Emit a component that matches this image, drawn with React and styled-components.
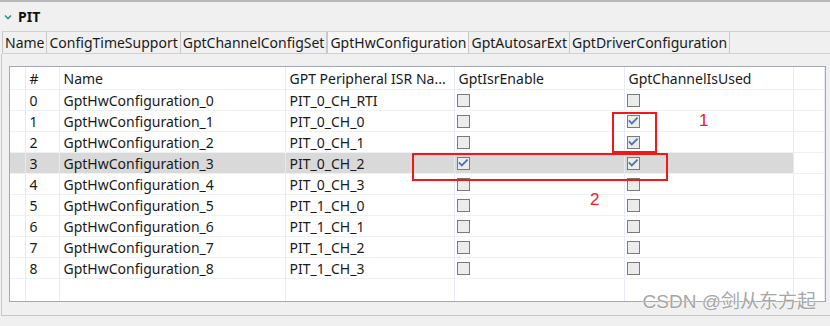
import React from "react";
import styled, { createGlobalStyle } from "styled-components";

const GlobalStyle = createGlobalStyle`
    body {
        margin: 0;
        background: #f0f0f0;
        font-family: "Noto Sans", "Open Sans", sans-serif;
        color: #1a1a1a;
    }
`;

const tabs = [
    "Name",
    "ConfigTimeSupport",
    "GptChannelConfigSet",
    "GptHwConfiguration",
    "GptAutosarExt",
    "GptDriverConfiguration",
];

const isrNames = [
    "PIT_0_CH_RTI", "PIT_0_CH_0", "PIT_0_CH_1", "PIT_0_CH_2",
    "PIT_0_CH_3", "PIT_1_CH_0", "PIT_1_CH_1", "PIT_1_CH_2", "PIT_1_CH_3",
];

const rows = isrNames.map((isr, i) => ({
    id: i,
    name: `GptHwConfiguration_${i}`,
    isr,
    isrEnable: i === 3,
    used: i >= 1 && i <= 3,
}));

class App extends React.Component {
    render() {
        return (
            <Frame>
                <GlobalStyle/>
                <SectionHeader>
                    <Chevron viewBox="0 0 10 10">
                        <path d="M2 3.5 L5 6.5 L8 3.5" fill="none" stroke="#3a8f8a" strokeWidth="1.6"/>
                    </Chevron>
                    PIT
                </SectionHeader>
                <TabBar>
                    {tabs.map(t => (
                        <Tab key={t} active={t === "GptHwConfiguration"}>{t}</Tab>
                    ))}
                </TabBar>
                <Body>
                    <Panel>
                        <Table>
                            <colgroup>
                                <col style={{width: 15}}/>
                                <col style={{width: 34}}/>
                                <col style={{width: 226}}/>
                                <col style={{width: 169}}/>
                                <col style={{width: 170}}/>
                                <col style={{width: 169}}/>
                                <col/>
                            </colgroup>
                            <thead>
                                <tr>
                                    <Th/>
                                    <Th>#</Th>
                                    <Th>Name</Th>
                                    <Th>GPT Peripheral ISR Na...</Th>
                                    <Th>GptIsrEnable</Th>
                                    <Th>GptChannelIsUsed</Th>
                                    <Th/>
                                </tr>
                            </thead>
                            <tbody>
                                {rows.map(r => (
                                    <Row key={r.id} selected={r.id === 3}>
                                        <Td/>
                                        <Td>{r.id}</Td>
                                        <Td>{r.name}</Td>
                                        <Td>{r.isr}</Td>
                                        <Td><CheckBox checked={r.isrEnable}/></Td>
                                        <Td><CheckBox checked={r.used}/></Td>
                                        <Td/>
                                    </Row>
                                ))}
                                <FillerRow>
                                    <Td/><Td/><Td/><Td/><Td/><Td/><Td/>
                                </FillerRow>
                            </tbody>
                        </Table>
                        <Mark left={602} top={45} width={45} height={41}/>
                        <Mark left={402} top={86} width={256} height={28}/>
                        <Note left={689} top={44}>1</Note>
                        <Note left={580} top={123}>2</Note>
                    </Panel>
                    <Watermark>CSDN @剑从东方起</Watermark>
                </Body>
            </Frame>
        );
    }
}

function CheckBox({checked}) {
    return (
        <Box>
            {checked && (
                <svg width="12" height="12" viewBox="0 0 12 12">
                    <path d="M1.8 5.4 L4.8 8.4 L10.6 2.6" fill="none" stroke="#4a76b0" strokeWidth="1.8"/>
                </svg>
            )}
        </Box>
    );
}

const Frame = styled.div`
    width: 830px;
    height: 326px;
    box-sizing: border-box;
    border-top: 2px solid #b8b8b8;
    overflow: hidden;
`;

const SectionHeader = styled.div`
    height: 29px;
    display: flex;
    align-items: center;
    gap: 5px;
    padding-left: 3px;
    font-size: 14px;
    font-weight: 700;
    color: #111;
`;

const Chevron = styled.svg`
    width: 10px;
    height: 10px;
`;

const TabBar = styled.div`
    display: flex;
    height: 21px;
    margin-left: 2px;
    border-top: 1px solid #d0d0d0;
    border-bottom: 1px solid #d0d0d0;
`;

const Tab = styled.div`
    display: flex;
    align-items: center;
    padding: 0 2px;
    font-size: 14px;
    border-right: 1px solid #c8c8c8;
    border-left: ${p => p.active ? "1px solid #c8c8c8" : "none"};
    background: ${p => p.active ? "#f7f7f7" : "transparent"};
    &:first-child {
        border-left: 1px solid #c8c8c8;
    }
`;

const Body = styled.div`
    position: relative;
    margin: 0 0 0 1px;
    padding: 12px 4px 13px 7px;
    border-left: 1px solid #c8c8c8;
    border-bottom: 1px solid #c8c8c8;
`;

const Panel = styled.div`
    position: relative;
    height: 234px;
    background: #fff;
    border: 1px solid #a4a9b1;
    overflow: hidden;
`;

const Table = styled.table`
    width: 100%;
    height: 100%;
    table-layout: fixed;
    border-collapse: collapse;
    font-size: 14px;
`;

const Th = styled.th`
    height: 22px;
    padding: 0 4px;
    text-align: left;
    font-weight: 400;
    white-space: nowrap;
    overflow: hidden;
    border-right: 1px solid #e6ebf3;
    border-bottom: 1px solid #eef0f3;
`;

const Row = styled.tr`
    height: 21px;
    background: ${p => p.selected ? "#d9d9d9" : "transparent"};
    & > td:last-child {
        background: #fff;
    }
`;

const FillerRow = styled.tr`
    & > td {
        border-bottom: none;
    }
`;

const Td = styled.td`
    padding: 0 4px;
    white-space: nowrap;
    overflow: hidden;
    border-right: 1px solid #e6ebf3;
    border-bottom: 1px solid #eef0f3;
`;

const Box = styled.div`
    width: 11px;
    height: 11px;
    margin-left: -2px;
    border: 1px solid #7a7a7a;
    background: #ececec;
    display: flex;
    align-items: center;
    justify-content: center;
    & svg {
        flex: none;
    }
`;

const Mark = styled.div`
    position: absolute;
    left: ${p => p.left}px;
    top: ${p => p.top}px;
    width: ${p => p.width}px;
    height: ${p => p.height}px;
    border: 2px solid #f01818;
    box-sizing: border-box;
    pointer-events: none;
`;

const Note = styled.div`
    position: absolute;
    left: ${p => p.left}px;
    top: ${p => p.top}px;
    font-size: 17px;
    color: #f02020;
    font-family: "Liberation Sans", sans-serif;
`;

const Watermark = styled.div`
    position: absolute;
    right: 14px;
    bottom: 2px;
    font-size: 19px;
    color: #a6a6a6;
    font-family: "Liberation Sans", "Noto Sans CJK SC", sans-serif;
    text-shadow: 0 0 2px #fff, 0 0 1px #fff;
`;

export default App;
